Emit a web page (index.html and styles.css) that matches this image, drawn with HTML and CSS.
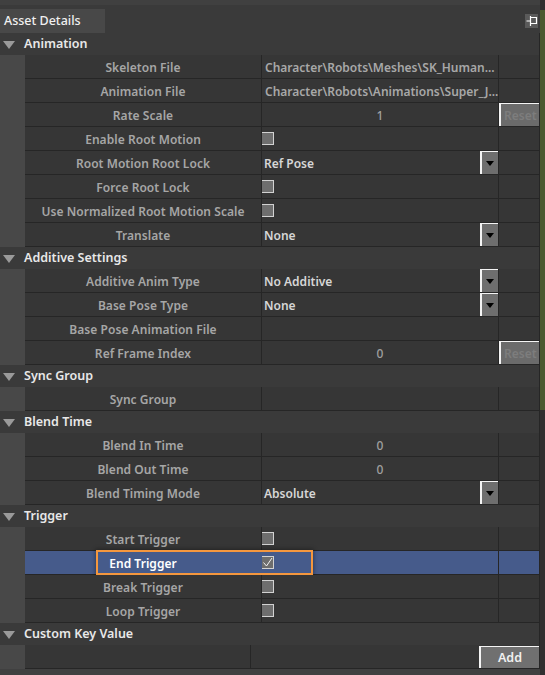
FILE: index.html
```html
<!DOCTYPE html>
<html>
<head>
<meta charset="utf-8">
<link rel="stylesheet" href="styles.css">
</head>
<body>
<div class="screen">
  <div class="window">
    <div class="topstrip"></div>
    <div class="tabbar">
      <div class="tab">Asset Details</div>
      <div class="pin">
        <svg width="13" height="14" viewBox="0 0 13 14"><path d="M5.5 2v10M1.5 7h4M5.5 3.5h6v6h-6" fill="none" stroke="#fff" stroke-width="1.2"/></svg>
      </div>
    </div>
    <div class="panel">
      <div class="sec-head"><span class="tri"></span>Animation</div>
      <div class="sec-body">
        <div class="indent"></div>
        <div class="rows">
          <div class="row"><div class="name">Skeleton File</div><div class="val path">Character\Robots\Meshes\SK_Human...</div><div class="act"></div></div>
          <div class="row"><div class="name">Animation File</div><div class="val path">Character\Robots\Animations\Super_J...</div><div class="act"></div></div>
          <div class="row"><div class="name">Rate Scale</div><div class="val num">1</div><div class="act"><div class="reset">Reset</div></div></div>
          <div class="row"><div class="name">Enable Root Motion</div><div class="val"><span class="cb"></span></div><div class="act"></div></div>
          <div class="row"><div class="name">Root Motion Root Lock</div><div class="val combo"><span class="ctext">Ref Pose</span><span class="drop"></span></div><div class="act"></div></div>
          <div class="row"><div class="name">Force Root Lock</div><div class="val"><span class="cb"></span></div><div class="act"></div></div>
          <div class="row"><div class="name">Use Normalized Root Motion Scale</div><div class="val"><span class="cb"></span></div><div class="act"></div></div>
          <div class="row"><div class="name">Translate</div><div class="val combo"><span class="ctext">None</span><span class="drop"></span></div><div class="act"></div></div>
        </div>
      </div>

      <div class="sec-head"><span class="tri"></span>Additive Settings</div>
      <div class="sec-body">
        <div class="indent"></div>
        <div class="rows">
          <div class="row"><div class="name">Additive Anim Type</div><div class="val combo"><span class="ctext">No Additive</span><span class="drop"></span></div><div class="act"></div></div>
          <div class="row"><div class="name">Base Pose Type</div><div class="val combo"><span class="ctext">None</span><span class="drop"></span></div><div class="act"></div></div>
          <div class="row"><div class="name">Base Pose Animation File</div><div class="val"></div><div class="act"></div></div>
          <div class="row"><div class="name">Ref Frame Index</div><div class="val num">0</div><div class="act"><div class="reset">Reset</div></div></div>
        </div>
      </div>

      <div class="sec-head"><span class="tri"></span>Sync Group</div>
      <div class="sec-body">
        <div class="indent"></div>
        <div class="rows">
          <div class="row"><div class="name">Sync Group</div><div class="val"></div><div class="act"></div></div>
        </div>
      </div>

      <div class="sec-head"><span class="tri"></span>Blend Time</div>
      <div class="sec-body">
        <div class="indent"></div>
        <div class="rows">
          <div class="row"><div class="name">Blend In Time</div><div class="val num">0</div><div class="act"></div></div>
          <div class="row"><div class="name">Blend Out Time</div><div class="val num">0</div><div class="act"></div></div>
          <div class="row"><div class="name">Blend Timing Mode</div><div class="val combo"><span class="ctext">Absolute</span><span class="drop"></span></div><div class="act"></div></div>
        </div>
      </div>

      <div class="sec-head"><span class="tri"></span>Trigger</div>
      <div class="sec-body">
        <div class="indent"></div>
        <div class="rows">
          <div class="row"><div class="name">Start Trigger</div><div class="val"><span class="cb"></span></div><div class="act"></div></div>
          <div class="row selected"><div class="name">End Trigger</div><div class="val"><span class="cb"><svg width="11" height="11" viewBox="0 0 11 11"><path d="M1.5 5.5l3 3.5 5.5-8" fill="none" stroke="#f2f2f2" stroke-width="1"/></svg></span></div><div class="act"></div>
            <div class="focus"></div>
          </div>
          <div class="row"><div class="name">Break Trigger</div><div class="val"><span class="cb"></span></div><div class="act"></div></div>
          <div class="row"><div class="name">Loop Trigger</div><div class="val"><span class="cb"></span></div><div class="act"></div></div>
        </div>
      </div>

      <div class="sec-head"><span class="tri"></span>Custom Key Value</div>
      <div class="sec-body">
        <div class="indent"></div>
        <div class="rows">
          <div class="row custom"><div class="cname"></div><div class="cval"><div class="add">Add</div></div></div>
        </div>
      </div>
    </div>
    <div class="bottomstrip"></div>
  </div>
  <div class="edge"><div class="edge-green"></div><div class="edge-gray"></div></div>
</div>
</body>
</html>
```

FILE: styles.css
```css
html, body {
  margin: 0;
  padding: 0;
  background: #333333;
}
body {
  width: 545px;
  height: 675px;
  overflow: hidden;
  font-family: "Noto Sans", "Open Sans", sans-serif;
}
.screen {
  display: flex;
  width: 545px;
  height: 675px;
}
.window {
  width: 540px;
  display: flex;
  flex-direction: column;
  background: #3a3a3a;
}
.topstrip {
  height: 5px;
  background: #404040;
}
.tabbar {
  height: 28px;
  display: flex;
  align-items: flex-start;
  justify-content: space-between;
  background: #3a3a3a;
  box-sizing: border-box;
}
.tab {
  margin-top: 4px;
  height: 24px;
  width: 105px;
  background: #484848;
  color: #f0f0f0;
  font-size: 12.5px;
  font-weight: 500;
  line-height: 24px;
  padding-left: 4px;
  box-sizing: border-box;
}
.pin {
  margin-top: 9px;
  margin-right: 2px;
  width: 13px;
  height: 14px;
  background: #5a5a5a;
  display: flex;
}
.panel {
  border-right: 1px solid #262626;
  display: flex;
  flex-direction: column;
}
.sec-head {
  height: 22px;
  background: #3a3a3a;
  color: #e8e8e8;
  font-size: 12.5px;
  font-weight: 600;
  display: flex;
  align-items: center;
  line-height: 22px;
}
.tri {
  width: 0;
  height: 0;
  border-left: 6.5px solid transparent;
  border-right: 6.5px solid transparent;
  border-top: 8px solid #9a9a9a;
  margin-left: 3px;
  margin-right: 9px;
  margin-top: 1px;
}
.sec-body {
  display: flex;
}
.indent {
  width: 25px;
  background: #484848;
  flex: none;
}
.rows {
  flex: 1;
  display: flex;
  flex-direction: column;
}
.row {
  position: relative;
  height: 24px;
  display: flex;
  background: #363636;
  border-bottom: 1px solid #262626;
  box-sizing: border-box;
}
.name {
  width: 237px;
  flex: none;
  border-right: 1px solid #262626;
  box-sizing: border-box;
  text-align: center;
  color: #a6a6a6;
  font-size: 12px;
  font-weight: 600;
  line-height: 25px;
  white-space: nowrap;
  letter-spacing: 0.05px;
}
.val {
  width: 237px;
  flex: none;
  border-right: 1px solid #262626;
  box-sizing: border-box;
  display: flex;
  align-items: center;
  font-size: 12px;
  font-weight: 600;
  white-space: nowrap;
  overflow: hidden;
}
.act {
  flex: 1;
  display: flex;
}
.path {
  color: #a8a8a8;
  padding-left: 3px;
  padding-top: 2px;
}
.num {
  justify-content: center;
  color: #a0a0a0;
  font-weight: 500;
  padding-top: 2px;
}
.combo {
  justify-content: space-between;
}
.ctext {
  color: #d6d6d6;
  padding-left: 2px;
  padding-top: 2px;
}
.drop {
  width: 18px;
  height: 23px;
  box-sizing: border-box;
  background: #6e6e6e;
  border-left: 2px solid #f4f4f4;
  border-top: 1px solid #f4f4f4;
  display: flex;
  align-items: center;
  justify-content: center;
}
.drop::after {
  content: "";
  width: 0;
  height: 0;
  border-left: 4.5px solid transparent;
  border-right: 4.5px solid transparent;
  border-top: 5px solid #000;
}
.reset {
  flex: 1;
  height: 23px;
  box-sizing: border-box;
  background: #6b6b6b;
  border-left: 2px solid #f4f4f4;
  border-top: 1px solid #f4f4f4;
  color: #7d7d7d;
  font-size: 12px;
  font-weight: 600;
  line-height: 23px;
  padding-left: 3px;
  overflow: hidden;
  white-space: nowrap;
}
.cb {
  width: 13px;
  height: 13px;
  box-sizing: border-box;
  border: 1px solid #d2d2d2;
  background: #6e6e6e;
  display: flex;
  align-items: center;
  justify-content: center;
  margin-left: -1px;
}
.selected {
  background: #465b8b;
}
.selected .name {
  color: #ffffff;
  border-right-color: transparent;
}
.focus {
  position: absolute;
  left: 71px;
  top: -1px;
  width: 217px;
  height: 25px;
  box-sizing: border-box;
  border: 2px solid #f5973e;
  box-shadow: 0 0 4px 1px rgba(0,0,0,0.35);
  pointer-events: none;
}
.custom .cname {
  width: 226px;
  flex: none;
  border-right: 1px solid #262626;
  box-sizing: border-box;
}
.cval {
  flex: 1;
  display: flex;
  justify-content: flex-end;
  align-items: flex-end;
}
.add {
  width: 60px;
  height: 22px;
  box-sizing: border-box;
  background: #707070;
  border-left: 2px solid #f4f4f4;
  border-top: 1px solid #f4f4f4;
  color: #f0f0f0;
  font-size: 12.5px;
  font-weight: 600;
  text-align: center;
  line-height: 22px;
}
.bottomstrip {
  flex: 1;
  background: #404040;
}
.edge {
  flex: 1;
  display: flex;
  flex-direction: column;
  background: #303030;
}
.edge-green {
  height: 400px;
  margin-top: 10px;
  background: #4a5a30;
}
.edge-gray {
  flex: 1;
}
```
